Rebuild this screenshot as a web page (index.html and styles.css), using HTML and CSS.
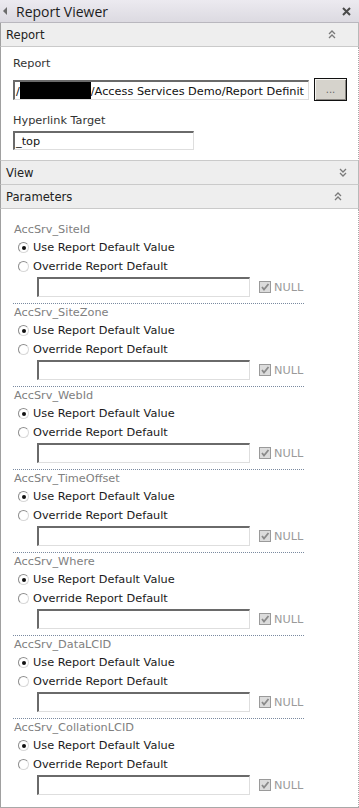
FILE: index.html
```html
<!DOCTYPE html>
<html lang="en">
<head>
    <meta charset="UTF-8">
    <meta name="viewport" content="width=device-width, initial-scale=1.0">
    <title>Report Viewer</title>
    <link rel="stylesheet" href="styles.css">
</head>
<body>
    <div class="toolpane">
        <div class="titlebar">
            <span class="title-arrow"></span>
            <span class="title-text">Report Viewer</span>
            <svg class="close" width="9" height="9" viewBox="0 0 9 9"><path d="M1 1L8 8M8 1L1 8" stroke="#4a4a4a" stroke-width="2"/></svg>
        </div>

        <div class="section-head">
            <span>Report</span>
            <svg class="chev chev-report" width="8" height="9" viewBox="0 0 8 9"><path d="M1 4L4 1L7 4M1 8L4 5L7 8" fill="none" stroke="#7a7a7a" stroke-width="1.3"/></svg>
        </div>
        <div class="section-body">
            <div class="field-label">Report</div>
            <div class="report-row">
                <div class="textbox report-path">/<span class="redacted"></span>/Access Services Demo/Report Definit</div>
                <button class="browse-btn">...</button>
            </div>
            <div class="field-label">Hyperlink Target</div>
            <div class="textbox target">_top</div>
        </div>

        <div class="section-head">
            <span>View</span>
            <svg class="chev chev-view" width="8" height="9" viewBox="0 0 8 9"><path d="M1 1L4 4L7 1M1 5L4 8L7 5" fill="none" stroke="#7a7a7a" stroke-width="1.3"/></svg>
        </div>
        <div class="section-head">
            <span>Parameters</span>
            <svg class="chev chev-params" width="8" height="9" viewBox="0 0 8 9"><path d="M1 4L4 1L7 4M1 8L4 5L7 8" fill="none" stroke="#7a7a7a" stroke-width="1.3"/></svg>
        </div>

        <div class="params" id="params"></div>
    </div>

    <script>
        // Параметры отчета
        const params = [
            'AccSrv_SiteId',
            'AccSrv_SiteZone',
            'AccSrv_WebId',
            'AccSrv_TimeOffset',
            'AccSrv_Where',
            'AccSrv_DataLCID',
            'AccSrv_CollationLCID'
        ];

        const list = document.getElementById('params');
        params.forEach(function (name) {
            const group = document.createElement('div');
            group.className = 'param';
            group.innerHTML =
                '<div class="param-name">' + name + '</div>' +
                '<div class="radio-row"><span class="radio checked"></span>Use Report Default Value</div>' +
                '<div class="radio-row"><span class="radio"></span>Override Report Default</div>' +
                '<div class="override-row">' +
                    '<div class="textbox override"></div>' +
                    '<span class="checkbox"><svg width="10" height="10" viewBox="0 0 10 10"><path d="M2 5L4 7.5L8.5 2" fill="none" stroke="#8a8a8a" stroke-width="1.8"/></svg></span>' +
                    '<span class="null-label">NULL</span>' +
                '</div>';
            list.appendChild(group);
        });
    </script>
</body>
</html>
```
FILE: styles.css
```css
body {
    margin: 0;
    background: white;
    font-family: "DejaVu Sans", Verdana, sans-serif;
    font-size: 11.3px;
    color: #1e1e1e;
}
.toolpane {
    width: 359px;
    height: 808px;
    box-sizing: border-box;
    border-bottom: 1px solid #a8a8a8;
    overflow: hidden;
}
.titlebar {
    height: 23px;
    box-sizing: border-box;
    display: flex;
    align-items: center;
    background: linear-gradient(#eceaf0, #dcdae1);
    border-bottom: 1px solid #b9b7be;
    font-family: "Open Sans", sans-serif;
    font-size: 14px;
    color: #1c1c1c;
}
.title-arrow {
    width: 0;
    height: 0;
    margin: 0 9px 0 3px;
    border-top: 4px solid transparent;
    border-bottom: 4px solid transparent;
    border-right: 4px solid #6c6c6c;
}
.title-text {
    flex: 1;
}
.close {
    margin-right: 8px;
}
.section-head {
    height: 24px;
    box-sizing: border-box;
    display: flex;
    align-items: center;
    justify-content: space-between;
    padding-left: 5px;
    background: #eeeeee;
    border-bottom: 1px solid #cacaca;
    border-left: 1px solid #a0a0a0;
    border-right: 1px solid #b8b8b8;
    font-size: 11.6px;
    color: #222;
}
.chev-report {
    margin-right: 22px;
}
.chev-view {
    margin-right: 11px;
}
.chev-params {
    margin-right: 16px;
}
.section-body {
    height: 114px;
    box-sizing: border-box;
    padding: 10px 0 0 12px;
    border-left: 1px solid #a0a0a0;
    border-right: 1px dotted #a8a8a8;
    border-bottom: 1px solid #cacaca;
}
.field-label {
    height: 14px;
    line-height: 14px;
    margin-bottom: 7px;
    color: #333;
}
.report-row {
    display: flex;
    align-items: center;
    gap: 5px;
    margin-bottom: 13px;
}
.textbox {
    height: 20px;
    box-sizing: border-box;
    line-height: 17px;
    padding-left: 1px;
    background: white;
    border: 1px solid #dedede;
    border-top: 2px solid #6a6a6a;
    border-left: 2px solid #6a6a6a;
    white-space: nowrap;
    overflow: hidden;
    font-size: 11.3px;
    color: #111;
}
.report-path {
    width: 296px;
}
.redacted {
    display: inline-block;
    width: 71px;
    height: 18px;
    vertical-align: -5px;
    background: black;
}
.browse-btn {
    width: 33px;
    height: 23px;
    padding: 0;
    background: #d6d3cc;
    border: 1px solid #111;
    box-shadow: inset 1px 1px 0 #f4f3f0, inset -1px -1px 0 #8a8782;
    font-family: "DejaVu Sans", sans-serif;
    font-size: 10px;
    color: #666;
}
.target {
    width: 181px;
    height: 19px;
    margin-top: -4px;
}
.params {
    height: 598px;
    box-sizing: border-box;
    padding: 13px 0 0 12px;
    border-left: 1px solid #a0a0a0;
    border-right: 1px dotted #a8a8a8;
}
.param {
    width: 291px;
    padding: 1px 0 6px;
    border-bottom: 1px dotted #7a8aa0;
}
.param:first-child {
    padding-top: 0;
}
.param:last-child {
    border-bottom: none;
}
.param-name {
    height: 16px;
    line-height: 16px;
    padding-left: 1px;
    color: #808080;
}
.radio-row {
    height: 19px;
    display: flex;
    align-items: center;
    padding-left: 5px;
    color: #1a1a1a;
}
.radio {
    width: 11px;
    height: 11px;
    box-sizing: border-box;
    margin-right: 4px;
    border-radius: 50%;
    border: 1px solid #8d8d8d;
    border-right-color: #d8d8d8;
    border-bottom-color: #d8d8d8;
    background: white;
    position: relative;
}
.radio.checked::after {
    content: "";
    position: absolute;
    left: 3px;
    top: 3px;
    width: 4px;
    height: 4px;
    border-radius: 50%;
    background: #111;
}
.override-row {
    display: flex;
    align-items: center;
    margin-top: 1px;
    padding-left: 24px;
}
.override {
    width: 213px;
}
.checkbox {
    width: 12px;
    height: 12px;
    box-sizing: border-box;
    margin: 0 3px 0 9px;
    border: 1px solid #9a9a9a;
    background: #dcdcdc;
    display: flex;
    align-items: center;
    justify-content: center;
}
.null-label {
    color: #9a9a9a;
}
```
